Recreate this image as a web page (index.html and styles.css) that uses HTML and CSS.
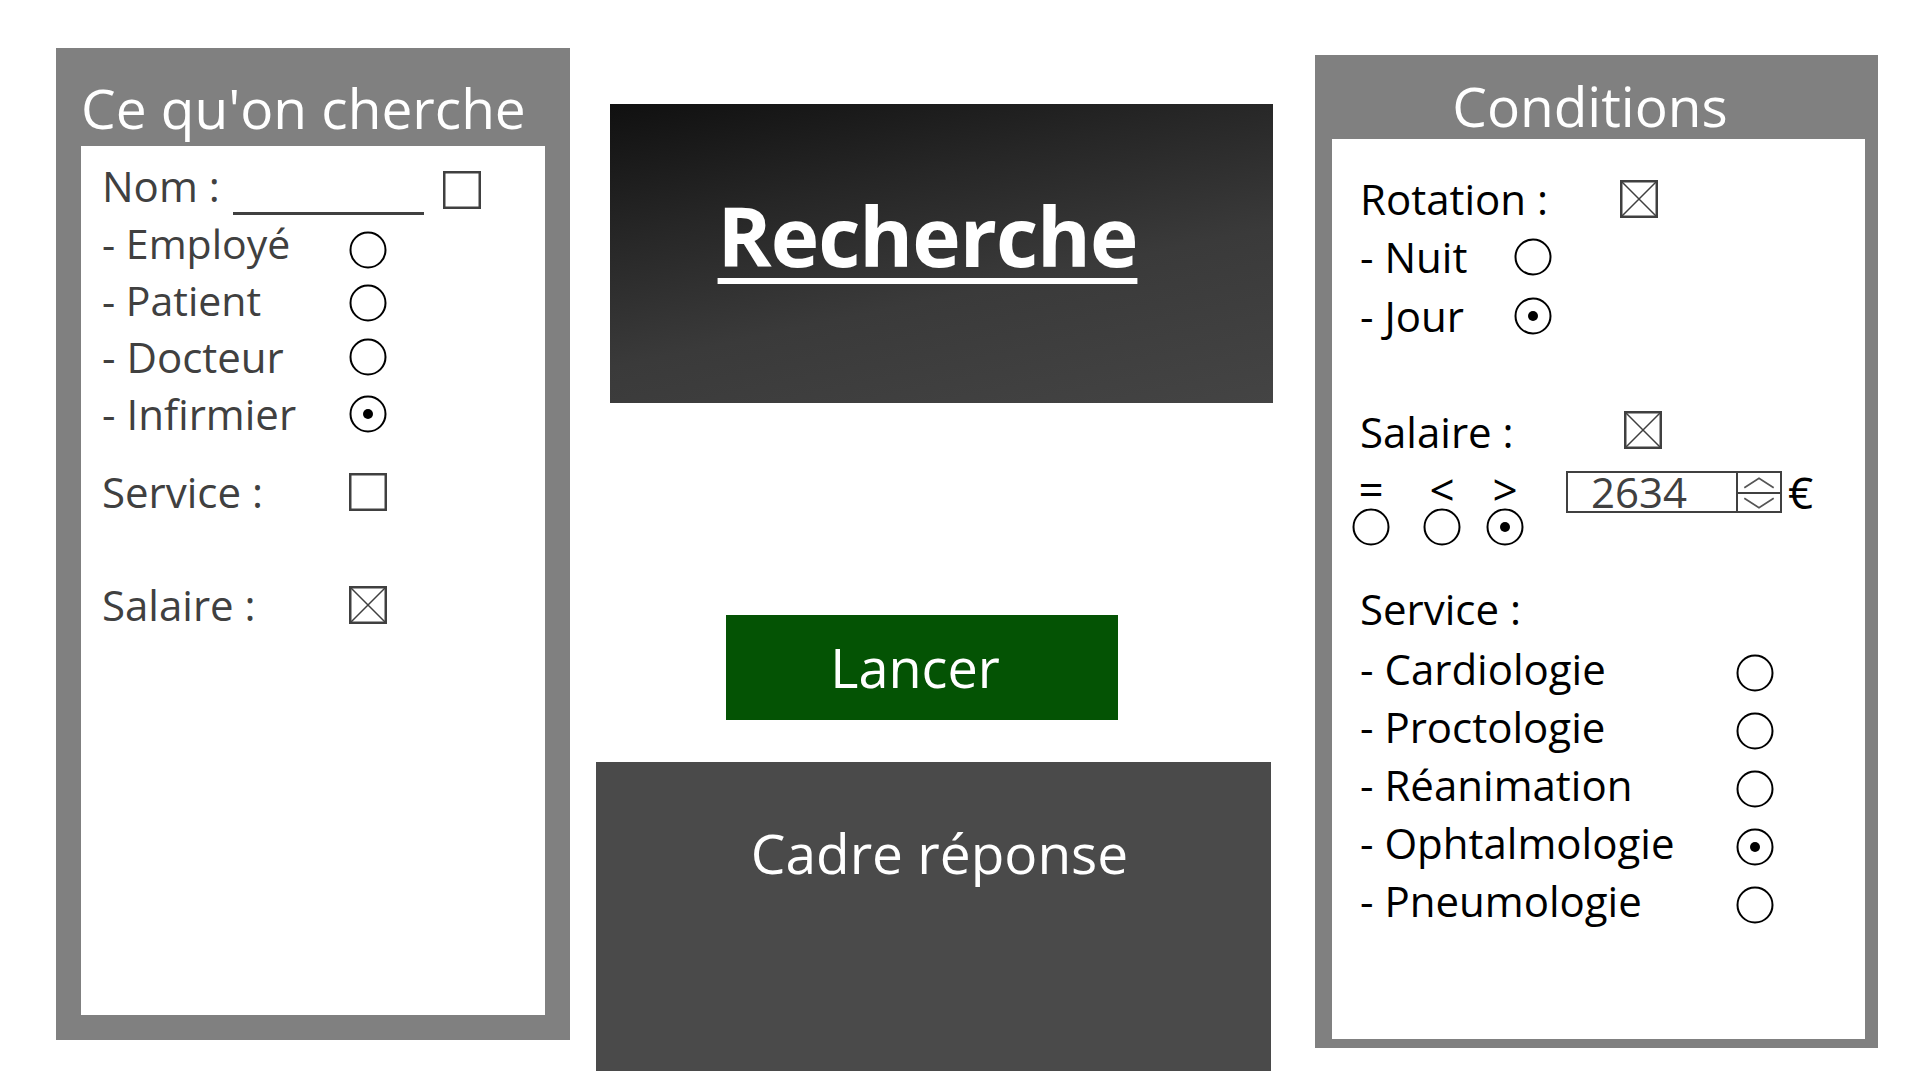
FILE: index.html
```html
<!DOCTYPE html>
<html lang="fr">
<head>
<meta charset="utf-8">
<title>Recherche</title>
<link rel="stylesheet" href="styles.css">
</head>
<body>
<div class="page">
  <section class="panel panel-left">
    <h2 class="panel-title left-title">Ce qu'on cherche</h2>
    <div class="panel-body left-body">
      <div class="row">
        <span class="label lw-nom lift-4">Nom :</span>
        <span class="blank"></span>
        <svg class="chk" viewBox="0 0 38 38"><rect x="1.25" y="1.25" width="35.5" height="35.5"/></svg>
      </div>
      <div class="row mt-10">
        <span class="label lw-left small lift-7">- Employé</span>
        <svg class="radio" viewBox="0 0 38 38"><circle cx="19" cy="19" r="17.5"/></svg>
      </div>
      <div class="row">
        <span class="label lw-left small">- Patient</span>
        <svg class="radio drop-3" viewBox="0 0 38 38"><circle cx="19" cy="19" r="17.5"/></svg>
      </div>
      <div class="row mt-7">
        <span class="label lw-left">- Docteur</span>
        <svg class="radio" viewBox="0 0 38 38"><circle cx="19" cy="19" r="17.5"/></svg>
      </div>
      <div class="row mt-7">
        <span class="label lw-left">- Infirmier</span>
        <svg class="radio" viewBox="0 0 38 38"><circle cx="19" cy="19" r="17.5"/><circle class="dot" cx="19" cy="19" r="5"/></svg>
      </div>
      <div class="row mt-28">
        <span class="label lw-left">Service :</span>
        <svg class="chk" viewBox="0 0 38 38"><rect x="1.25" y="1.25" width="35.5" height="35.5"/></svg>
      </div>
      <div class="row mt-63">
        <span class="label lw-left">Salaire :</span>
        <svg class="chk" viewBox="0 0 38 38"><rect x="1.25" y="1.25" width="35.5" height="35.5"/><path d="M2 2L36 36M36 2L2 36"/></svg>
      </div>
    </div>
  </section>

  <div class="mid">
    <div class="title-box"><span class="title-text">Recherche</span></div>
    <div class="launch">Lancer</div>
    <div class="answer">Cadre réponse</div>
  </div>

  <section class="panel panel-right">
    <h2 class="panel-title right-title">Conditions</h2>
    <div class="panel-body right-body">
      <div class="row dark">
        <span class="label lw-rot">Rotation :</span>
        <svg class="chk" viewBox="0 0 38 38"><rect x="1.25" y="1.25" width="35.5" height="35.5"/><path d="M2 2L36 36M36 2L2 36"/></svg>
      </div>
      <div class="row dark mt-8">
        <span class="label lw-day">- Nuit</span>
        <svg class="radio" viewBox="0 0 38 38"><circle cx="19" cy="19" r="17.5"/></svg>
      </div>
      <div class="row dark mt-9">
        <span class="label lw-day">- Jour</span>
        <svg class="radio" viewBox="0 0 38 38"><circle cx="19" cy="19" r="17.5"/><circle class="dot" cx="19" cy="19" r="5"/></svg>
      </div>
      <div class="row dark mt-66">
        <span class="label lw-sal">Salaire :</span>
        <svg class="chk chk-up" viewBox="0 0 38 38"><rect x="1.25" y="1.25" width="35.5" height="35.5"/><path d="M2 2L36 36M36 2L2 36"/></svg>
      </div>
      <div class="ops">
        <div class="op">
          <span class="op-sym">=</span>
          <svg class="radio" viewBox="0 0 38 38"><circle cx="19" cy="19" r="17.5"/></svg>
        </div>
        <div class="op op-2">
          <span class="op-sym">&lt;</span>
          <svg class="radio" viewBox="0 0 38 38"><circle cx="19" cy="19" r="17.5"/></svg>
        </div>
        <div class="op op-3">
          <span class="op-sym">&gt;</span>
          <svg class="radio" viewBox="0 0 38 38"><circle cx="19" cy="19" r="17.5"/><circle class="dot" cx="19" cy="19" r="5"/></svg>
        </div>
        <div class="spin">
          <span class="spin-val">2634</span>
          <span class="spin-btns">
            <span class="spin-btn spin-up"><svg viewBox="0 0 40 18"><path d="M6 14L20 5L34 14"/></svg></span>
            <span class="spin-btn"><svg viewBox="0 0 40 18"><path d="M6 4L20 13L34 4"/></svg></span>
          </span>
        </div>
        <span class="euro">€</span>
      </div>
      <div class="row dark mt-38">
        <span class="label">Service :</span>
      </div>
      <div class="row dark mt-10">
        <span class="label lw-svc">- Cardiologie</span>
        <svg class="radio low" viewBox="0 0 38 38"><circle cx="19" cy="19" r="17.5"/></svg>
      </div>
      <div class="row dark mt-8">
        <span class="label lw-svc">- Proctologie</span>
        <svg class="radio low" viewBox="0 0 38 38"><circle cx="19" cy="19" r="17.5"/></svg>
      </div>
      <div class="row dark mt-8">
        <span class="label lw-svc">- Réanimation</span>
        <svg class="radio low" viewBox="0 0 38 38"><circle cx="19" cy="19" r="17.5"/></svg>
      </div>
      <div class="row dark mt-8">
        <span class="label lw-svc">- Ophtalmologie</span>
        <svg class="radio low" viewBox="0 0 38 38"><circle cx="19" cy="19" r="17.5"/><circle class="dot" cx="19" cy="19" r="5"/></svg>
      </div>
      <div class="row dark mt-8">
        <span class="label lw-svc">- Pneumologie</span>
        <svg class="radio low" viewBox="0 0 38 38"><circle cx="19" cy="19" r="17.5"/></svg>
      </div>
    </div>
  </section>
</div>
</body>
</html>
```

FILE: styles.css
```css
* { box-sizing: border-box; }

html, body {
  margin: 0;
  padding: 0;
  background: #ffffff;
}

body {
  width: 1920px;
  height: 1080px;
  overflow: hidden;
  font-family: "Open Sans", Lato, sans-serif;
}

.page {
  display: flex;
  align-items: flex-start;
  padding-left: 56px;
}

/* ---------- side panels ---------- */
.panel {
  background: #808080;
  display: flex;
  flex-direction: column;
}

.panel-title {
  margin: 0;
  color: #ffffff;
  font-weight: normal;
  white-space: nowrap;
}

.panel-body {
  background: #ffffff;
  flex: 1;
}

.panel-left {
  width: 514px;
  height: 992px;
  margin-top: 48px;
  padding: 0 25px 25px 25px;
}

.left-title {
  height: 98px;
  font-size: 55px;
  line-height: 64px;
  padding-top: 28px;
}

.left-body {
  padding: 19px 0 0 21px;
}

.panel-right {
  width: 563px;
  height: 993px;
  margin-top: 55px;
  margin-left: 42px;
  padding: 0 13px 9px 17px;
}

.right-title {
  height: 84px;
  font-size: 55px;
  line-height: 68px;
  padding-top: 17px;
  padding-right: 17px;
  text-align: center;
}

.right-body {
  padding: 35px 0 0 28px;
}

/* ---------- rows ---------- */
.row {
  display: flex;
  align-items: center;
  height: 50px;
  font-size: 42px;
  color: #404040;
  white-space: nowrap;
}

.row.dark { color: #000000; }

.label { line-height: 50px; }
.label.small { font-size: 41px; }
.lift-4 { margin-bottom: 8px; }
.lift-7 { margin-bottom: 14px; }

.lw-nom { width: 131px; }
.lw-left { width: 247px; }
.lw-rot { width: 260px; }
.lw-day { width: 154px; }
.lw-sal { width: 264px; }
.lw-svc { width: 376px; }

.mt-7 { margin-top: 7px; }
.mt-8 { margin-top: 8px; }
.mt-9 { margin-top: 9px; }
.mt-10 { margin-top: 10px; }
.mt-28 { margin-top: 28px; }
.mt-38 { margin-top: 38px; }
.mt-63 { margin-top: 63px; }
.mt-66 { margin-top: 66px; }

.blank {
  align-self: stretch;
  width: 191px;
  margin-right: 19px;
  border-bottom: 3px solid #404040;
}

/* ---------- controls ---------- */
.chk {
  width: 38px;
  height: 38px;
  flex: none;
}
.chk rect {
  fill: none;
  stroke: #404040;
  stroke-width: 2.5;
}
.chk path {
  stroke: #404040;
  stroke-width: 1.5;
}
.chk-up { margin-bottom: 4px; }

.radio {
  width: 38px;
  height: 38px;
  flex: none;
}
.radio circle {
  fill: none;
  stroke: #000000;
  stroke-width: 2;
}
.radio .dot {
  fill: #000000;
  stroke: none;
}
.radio.low { margin-top: 8px; }
.radio.drop-3 { margin-top: 6px; }

/* ---------- operators + spinner ---------- */
.ops {
  display: flex;
  align-items: flex-start;
  margin-top: 14px;
  margin-left: -8px;
  height: 75px;
}

.op {
  width: 38px;
  display: flex;
  flex-direction: column;
  align-items: center;
  color: #000000;
}
.op-2 { margin-left: 33px; }
.op-3 { margin-left: 25px; }

.op-sym {
  height: 37px;
  font-size: 44px;
  line-height: 37px;
}

.spin {
  display: flex;
  width: 216px;
  height: 42px;
  margin-left: 42px;
  border: 2.5px solid #404040;
}

.spin-val {
  flex: 1;
  padding-left: 23px;
  font-size: 42px;
  line-height: 37px;
  color: #404040;
}

.spin-btns {
  width: 44px;
  display: flex;
  flex-direction: column;
  border-left: 2.5px solid #404040;
}

.spin-btn {
  flex: 1;
  display: flex;
}
.spin-btn svg {
  width: 100%;
  height: 100%;
}
.spin-btn path {
  fill: none;
  stroke: #555555;
  stroke-width: 1.6;
}
.spin-up { border-bottom: 2px solid #404040; }

.euro {
  margin-left: 6px;
  font-size: 44px;
  line-height: 42px;
  color: #000000;
}

/* ---------- middle column ---------- */
.mid {
  width: 677px;
  margin-left: 26px;
  display: flex;
  flex-direction: column;
  align-items: flex-start;
}

.title-box {
  width: 663px;
  height: 299px;
  margin-top: 104px;
  margin-left: 14px;
  padding-top: 79px;
  padding-right: 28px;
  text-align: center;
  background: linear-gradient(168deg, #101010 0%, #262626 30%, #3a3a3a 60%, #444444 100%);
}

.title-text {
  font-size: 82px;
  font-weight: bold;
  letter-spacing: -1px;
  line-height: 104px;
  color: #ffffff;
  text-decoration: underline;
  text-decoration-thickness: 6px;
  text-underline-offset: 11px;
}

.launch {
  width: 392px;
  height: 105px;
  margin-top: 212px;
  margin-left: 130px;
  padding-right: 14px;
  background: #045304;
  color: #ffffff;
  font-size: 54px;
  line-height: 105px;
  text-align: center;
}

.answer {
  width: 675px;
  height: 309px;
  margin-top: 42px;
  padding-top: 57px;
  padding-left: 12px;
  background: #4a4a4a;
  color: #ffffff;
  font-size: 55px;
  line-height: 68px;
  text-align: center;
}
```
